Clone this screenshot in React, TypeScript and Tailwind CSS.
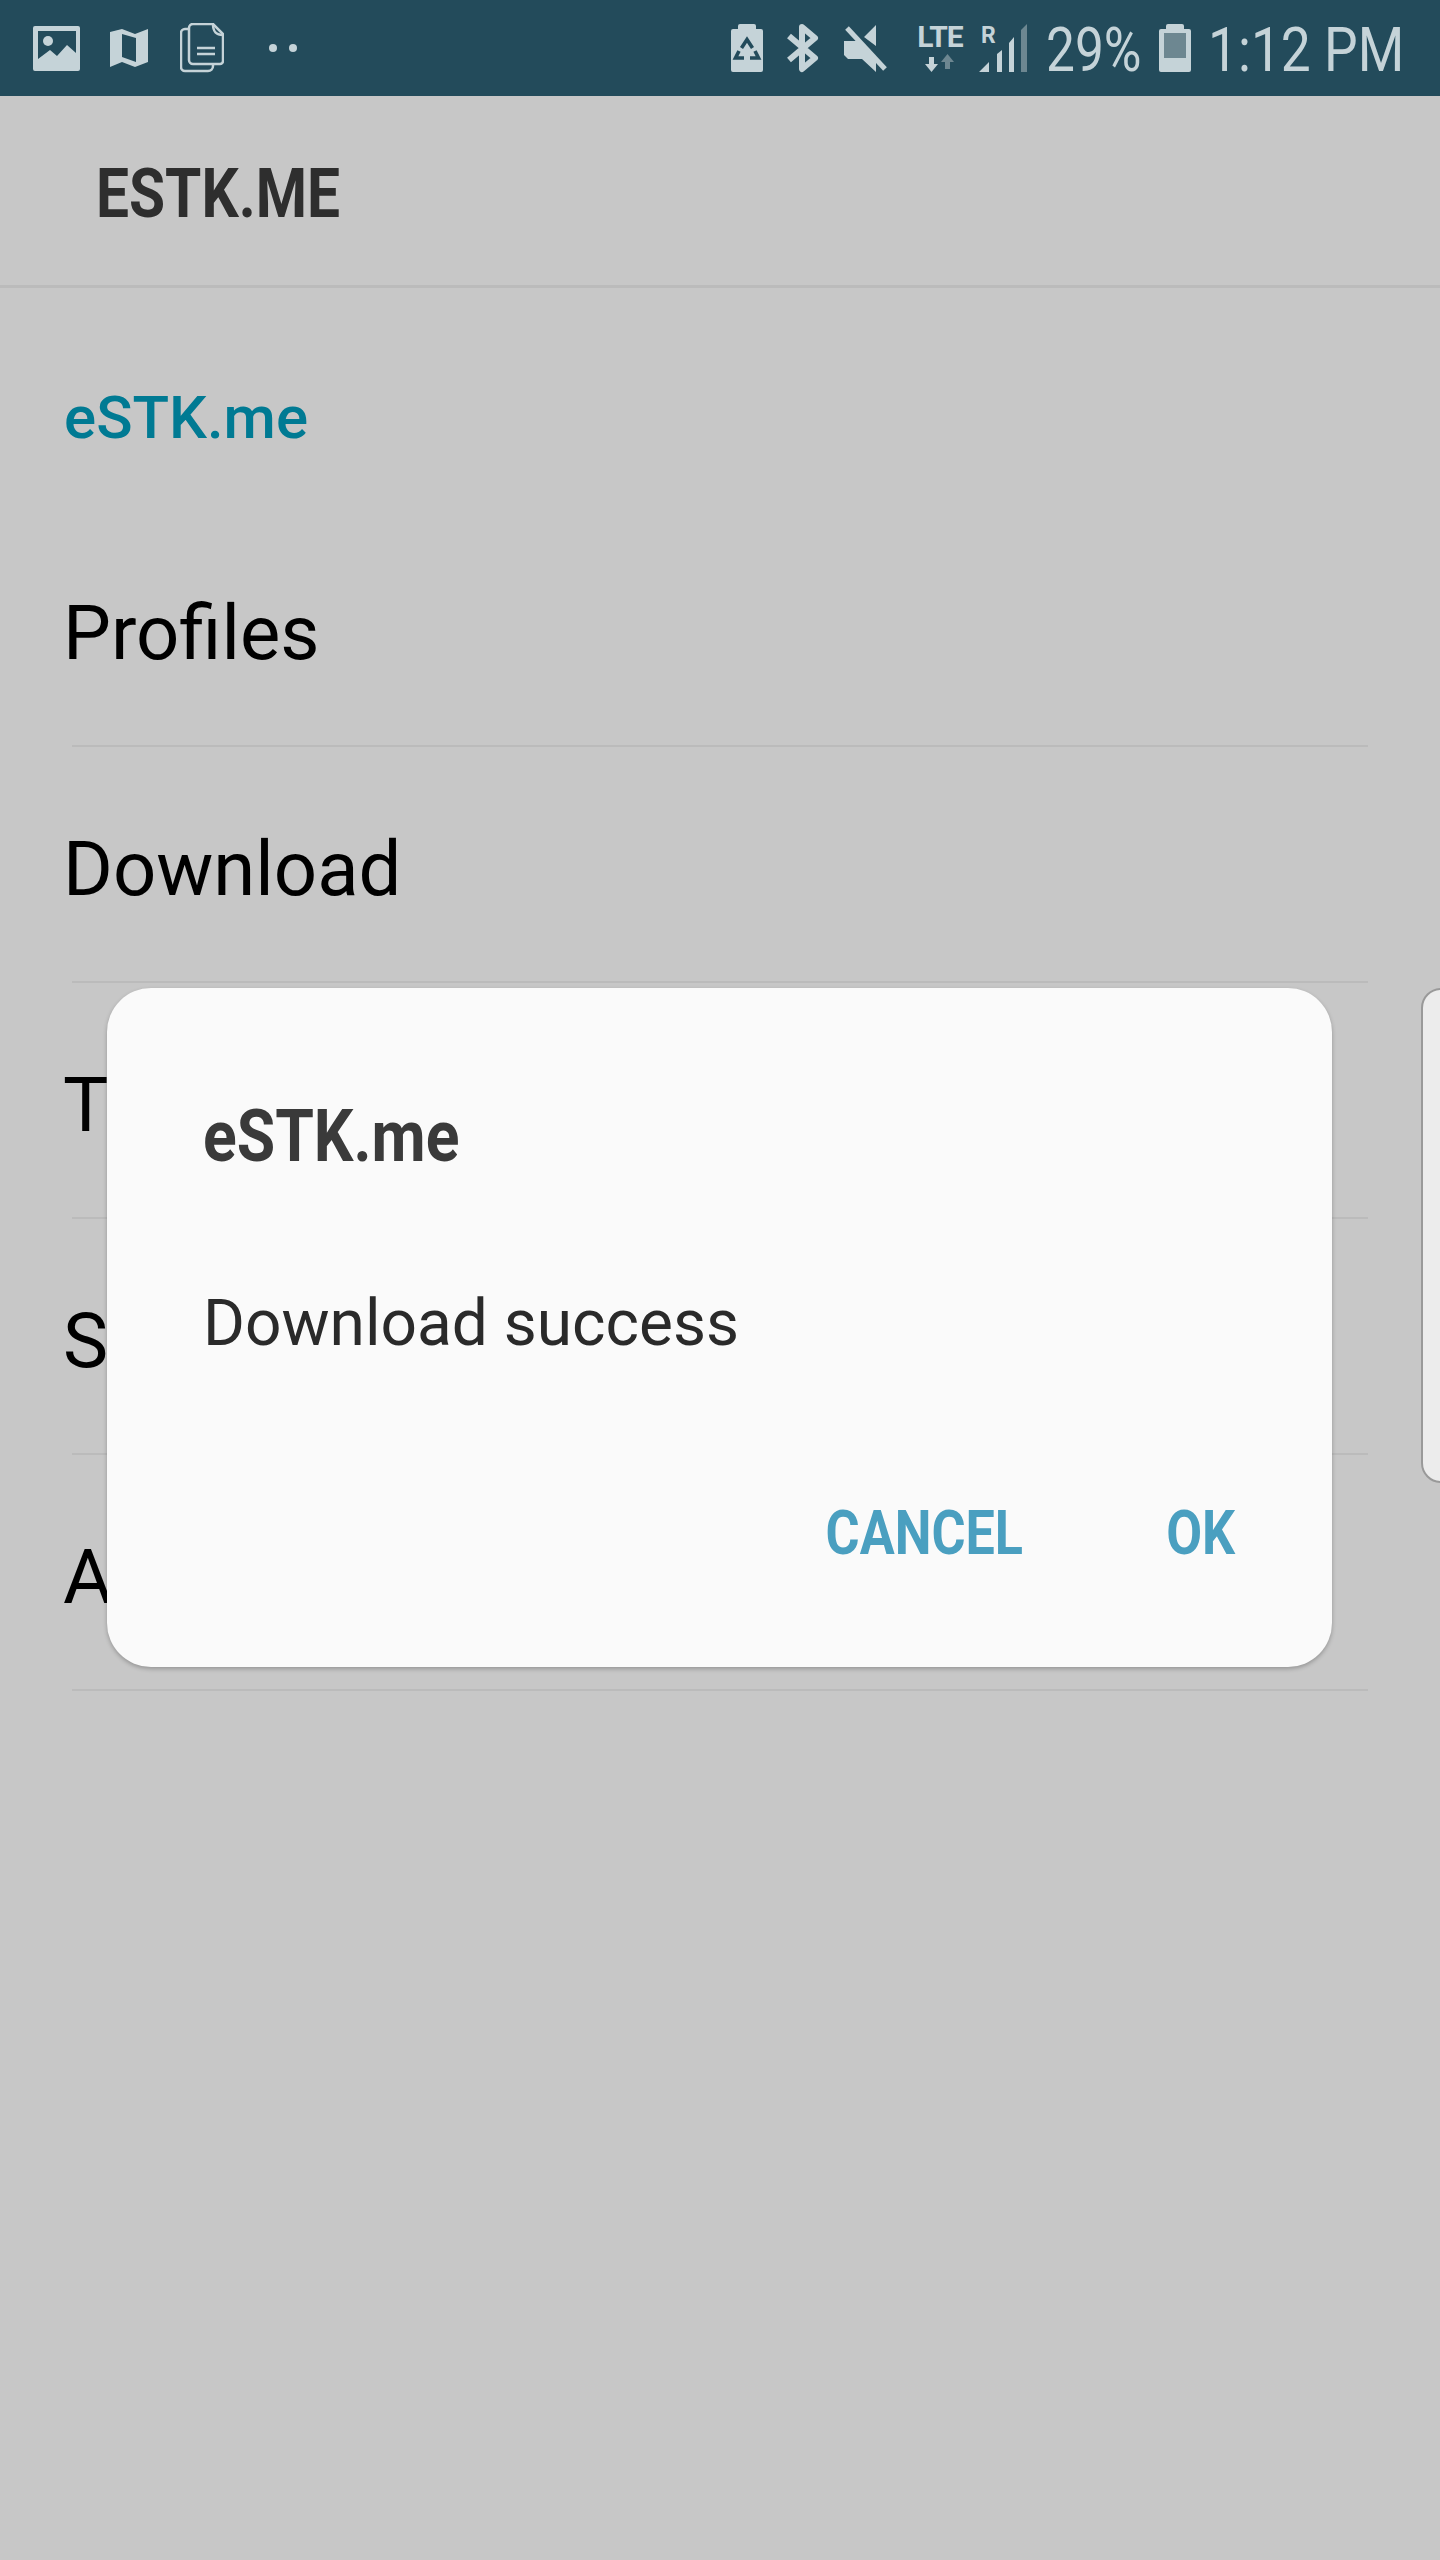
const roboto = "font-['Roboto',sans-serif]";

const ImageIcon = () => (
  <svg width="47" height="45" viewBox="0 0 47 45" className="mr-[30px]">
    <path fillRule="evenodd" fill="#c5d3d8" d="M2 0h43a2 2 0 0 1 2 2v41a2 2 0 0 1-2 2H2a2 2 0 0 1-2-2V2a2 2 0 0 1 2-2zM5 5v28l12-9 7 6 10-11 9 8V5z" />
    <circle cx="15" cy="15" r="5" fill="#c5d3d8" />
  </svg>
);

const MapIcon = () => (
  <svg width="38" height="38" viewBox="0 0 38 38" className="mr-[32px]">
    <path fillRule="evenodd" fill="#c5d3d8" d="M0 3l12-3 13 5 13-5v33l-13 5-13-5-12 5zM12 5v23l14 5V9z" />
  </svg>
);

const DocsIcon = () => (
  <svg width="44" height="50" viewBox="0 0 44 50" fill="none" stroke="#c5d3d8" strokeWidth="2.5" className="mr-[45px]">
    <path d="M9 6H5a4 4 0 0 0-4 4v34a4 4 0 0 0 4 4h23a5 5 0 0 0 5-5v-2" />
    <path d="M13 1h20l10 10v27a3 3 0 0 1-3 3H13a4 4 0 0 1-4-4V5a4 4 0 0 1 4-4z" />
    <path d="M33 1c0 7 2 11 10 11M17 25h18M17 31h18" />
  </svg>
);

const BatteryRecycle = () => (
  <svg width="32" height="48" viewBox="0 0 32 48" className="mr-[24px]">
    <path fill="#c5d3d8" d="M9 0h14a2 2 0 0 1 2 2v3h5a2 2 0 0 1 2 2v39a2 2 0 0 1-2 2H2a2 2 0 0 1-2-2V7a2 2 0 0 1 2-2h5V2a2 2 0 0 1 2-2z" />
    <path fill="none" stroke="#234b5b" strokeWidth="3.6" d="M10.5 24L16 15.500L21.500 24M8 27l-3.500 7H13M24 27l3.500 7H19" />
  </svg>
);

const Bluetooth = () => (
  <svg width="32" height="50" viewBox="0 0 32 50" fill="none" stroke="#c5d3d8" strokeWidth="6" strokeLinejoin="round" className="mr-[25px]">
    <path d="M2 13l26 22-13 11V4l13 11L2 37" />
  </svg>
);

const Mute = () => (
  <svg width="44" height="48" viewBox="0 0 44 48" className="mr-[27px]">
    <path fill="#c5d3d8" d="M20 13L32 1v21zM0 17h14l18 19v12L18 35H4l-4-4z" />
    <path stroke="#c5d3d8" strokeWidth="5" d="M3 4l38 41" />
  </svg>
);

const Network = () => (
  <div className="mr-[19px] flex">
    <div className="mr-[14px] flex w-[50px] flex-col items-center pt-[2px]">
      <span className={`${roboto} text-[30px] leading-[21px] font-bold tracking-[-1px] text-[#c5d3d8]`}>LTE</span>
      <svg width="30" height="18" viewBox="0 0 30 18" className="mt-[7px]">
        <path fill="#c5d3d8" d="M4 3h5v7h4l-6.500 8L0 10h4z" />
        <path fill="#6d8791" d="M20 15h5V8h4L22.500 0 16 8h4z" />
      </svg>
    </div>
    <div className="relative h-[48px] w-[48px]">
      <span className={`${roboto} absolute top-[3px] left-[2px] text-[23px] leading-[18px] font-bold text-[#c5d3d8]`}>R</span>
      <svg width="48" height="48" viewBox="0 0 48 48" className="absolute top-0 left-0">
        <path fill="#c5d3d8" d="M0 48l10-10v10zM18 30l5-4v22h-5zM30 19l5-6v35h-5z" />
        <path fill="#6d8791" d="M42 6l6-6v48h-6z" />
      </svg>
    </div>
  </div>
);

const BatteryLevel = () => (
  <svg width="32" height="48" viewBox="0 0 32 48" className="mr-[17px] ml-[19px]">
    <path fill="#c5d3d8" d="M9 0h14a2 2 0 0 1 2 2v3h5a2 2 0 0 1 2 2v39a2 2 0 0 1-2 2H2a2 2 0 0 1-2-2V7a2 2 0 0 1 2-2h5V2a2 2 0 0 1 2-2z" />
    <path fill="#6d8791" d="M5 9h22v25H5z" />
  </svg>
);

const StatusBar = () => (
  <div className="flex h-[96px] items-center justify-between bg-[#234b5b] pr-[39px] pl-[33px]">
    <div className="flex items-center">
      <ImageIcon />
      <MapIcon />
      <DocsIcon />
      <div className="flex gap-[12px]">
        <div className="size-[8px] rounded-full bg-[#c5d3d8]" />
        <div className="size-[8px] rounded-full bg-[#c5d3d8]" />
      </div>
    </div>
    <div className="flex items-center">
      <BatteryRecycle />
      <Bluetooth />
      <Mute />
      <Network />
      <span className={`${roboto} mt-[3px] inline-block w-[94px] origin-left scale-x-[0.83] text-[62px] leading-none font-normal whitespace-nowrap text-[#c5d3d8]`}>29%</span>
      <BatteryLevel />
      <span className={`${roboto} mt-[3px] inline-block w-[193px] origin-left scale-x-[0.86] text-[62px] leading-none font-normal whitespace-nowrap text-[#c5d3d8]`}>1:12 PM</span>
    </div>
  </div>
);

const Row = ({ label }: { label: string }) => (
  <div className="mr-[72px] ml-[72px] flex h-[236px] items-center border-b-2 border-[#bbbbbb] pt-[10px]">
    <span className={`${roboto} -ml-[9px] text-[76px] text-black`}>{label}</span>
  </div>
);

export default function App() {
  return (
    <div className="relative h-[2560px] w-[1440px] overflow-hidden bg-[#c7c7c7]">
      <StatusBar />
      <div className="flex h-[192px] items-center border-b-[3px] border-[#bbbbbb] pt-[6px] pl-[96px]">
        <span className={`${roboto} inline-block origin-left scale-x-[0.85] text-[69px] font-bold whitespace-nowrap text-[#2e2e2e]`}>ESTK.ME</span>
      </div>
      <div className={`${roboto} h-[223px] pt-[85px] pl-[64px] text-[60px] font-medium text-[#007a93]`}>eSTK.me</div>
      <Row label="Profiles" />
      <Row label="Download" />
      <Row label="T" />
      <Row label="S" />
      <Row label="A" />

      <div className="absolute top-[988px] left-[107px] flex h-[679px] w-[1225px] flex-col rounded-[44px] bg-[#fafafa] px-[96px] shadow-[0_2px_4px_rgba(0,0,0,0.25)]">
        <div className={`${roboto} mt-[112px] origin-left scale-x-[0.855] text-[73px] leading-[72px] font-bold text-[#3a3a3a]`}>eSTK.me</div>
        <div className={`${roboto} mt-[116px] text-[64px] leading-[72px] text-[#2a2a2a]`}>Download success</div>
        <div className="mt-[145px] mr-px flex justify-end gap-[130px]">
          <span className={`${roboto} inline-block origin-right scale-x-[0.84] text-[62px] leading-[56px] font-bold text-[#4a9fc0]`}>CANCEL</span>
          <span className={`${roboto} inline-block origin-right scale-x-[0.84] text-[62px] leading-[56px] font-bold text-[#4a9fc0]`}>OK</span>
        </div>
      </div>

      <div className="absolute top-[988px] -right-[30px] h-[495px] w-[49px] rounded-[20px] border-2 border-[#999999] bg-[#ececec]" />
    </div>
  );
}
